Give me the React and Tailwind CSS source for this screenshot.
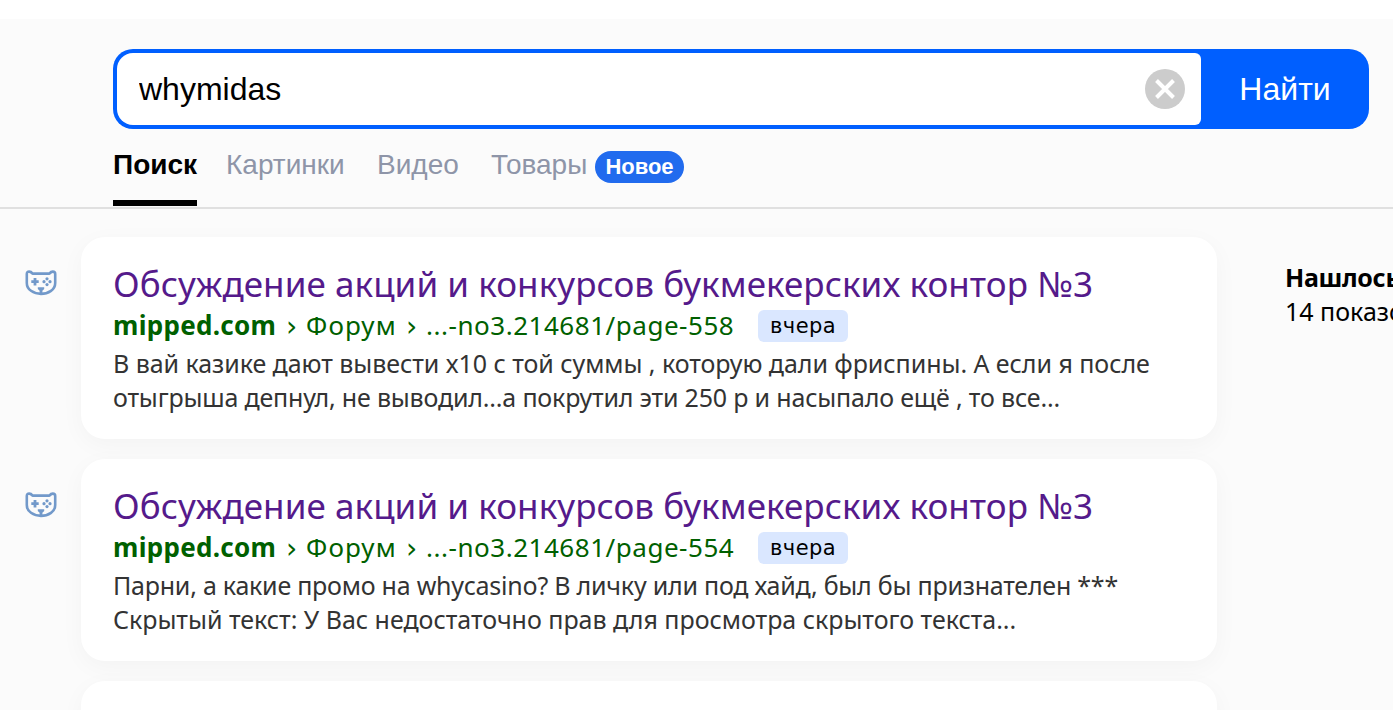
import { useState } from 'react';
import clsx from 'clsx';

const tabs = [
  { id: 'search', label: 'Поиск', className: 'w-[84px] mr-[29px]' },
  { id: 'images', label: 'Картинки', className: 'w-[119px] mr-8' },
  { id: 'video', label: 'Видео', className: 'w-[82px] mr-8' },
  { id: 'goods', label: 'Товары', className: 'w-[96px] mr-2', badge: 'Новое' },
];

const results = [
  {
    id: 1,
    title: 'Обсуждение акций и конкурсов букмекерских контор №3',
    host: 'mipped.com',
    section: 'Форум',
    page: '...-no3.214681/page-558',
    date: 'вчера',
    lines: [
      { text: 'В вай казике дают вывести х10 с той суммы , которую дали фриспины. А если я после', className: 'tracking-[-0.05px]' },
      { text: 'отыгрыша депнул, не выводил...а покрутил эти 250 р и насыпало ещё , то все...', className: 'tracking-[-0.18px]' },
    ],
  },
  {
    id: 2,
    title: 'Обсуждение акций и конкурсов букмекерских контор №3',
    host: 'mipped.com',
    section: 'Форум',
    page: '...-no3.214681/page-554',
    date: 'вчера',
    lines: [
      { text: 'Парни, а какие промо на whycasino? В личку или под хайд, был бы признателен ***', className: 'tracking-[-0.23px]' },
      { text: 'Скрытый текст: У Вас недостаточно прав для просмотра скрытого текста...', className: 'tracking-[-0.02px]' },
    ],
  },
];

function SiteIcon() {
  return (
    <svg width="32" height="28" viewBox="0 0 32 28" fill="none" stroke="#7299ca" strokeWidth="2.6" strokeLinejoin="round" strokeLinecap="round">
      <path d="M1.8 5Q1.8 2.6 4.2 2.6Q6 2.6 7.6 4.6H24.4Q26 2.6 27.8 2.6Q30.2 2.6 30.2 5V14Q30.2 19 26 21.8Q21.5 24.9 16 24.9Q10.5 24.9 6 21.8Q1.8 19 1.8 14Z" />
      <path d="M10 9V16.4M6.3 12.7H13.7" strokeWidth="2.8" strokeLinecap="butt" />
      <g fill="#7299ca" stroke="none">
        <circle cx="22" cy="9.8" r="1.6" />
        <circle cx="22" cy="15.6" r="1.6" />
        <circle cx="19" cy="12.7" r="1.6" />
        <circle cx="25" cy="12.7" r="1.6" />
        <path d="M12.8 18.2H19.2V20L17.4 21.8V25H14.6V21.8L12.8 20Z" />
      </g>
    </svg>
  );
}

function SearchForm() {
  const [query, setQuery] = useState('whymidas');

  return (
    <form onSubmit={(e) => e.preventDefault()} className="flex w-[1256px] h-20 rounded-[20px] bg-[#005fff] p-1 pr-0 overflow-hidden">
      <div className="flex items-center w-[1084px] h-[72px] rounded-l-2xl rounded-r-md bg-white pl-[22px] pr-4">
        <input
          value={query}
          onChange={(e) => setQuery(e.target.value)}
          className="flex-1 min-w-0 text-[32px] leading-10 text-black outline-none"
        />
        <button type="button" onClick={() => setQuery('')} aria-label="Очистить">
          <svg width="40" height="40" viewBox="0 0 40 40">
            <circle cx="20" cy="20" r="20" fill="#ccc" />
            <path d="M11.5 11.5L28.5 28.5M28.5 11.5L11.5 28.5" stroke="#fff" strokeWidth="4" />
          </svg>
        </button>
      </div>
      <button type="submit" className="flex-1 text-[32px] leading-10 text-white">Найти</button>
    </form>
  );
}

function Chevron() {
  return <span className="w-[29px] pt-[3px] text-center text-[28px] leading-8 font-['DejaVu_Sans',sans-serif]">›</span>;
}

function ResultCard({ result }) {
  return (
    <li className="flex">
      <div className="w-[81px] shrink-0 pl-[25px] pt-8"><SiteIcon /></div>
      <div className="w-[1136px] h-[202px] rounded-3xl bg-white pl-8 pt-[23px] shadow-[0_6px_24px_rgba(0,30,20,0.035)] whitespace-nowrap">
        <h2 className="mb-px text-[35px] leading-[47px] tracking-[0.06px] text-[#551a8b]">{result.title}</h2>
        <div className="flex items-center h-[34px] text-[26px] text-[#006000]">
          <b className="w-[164px] font-bold tracking-[0.3px]">{result.host}</b>
          <Chevron />
          <span className="w-[91px] tracking-[1.2px]">{result.section}</span>
          <Chevron />
          <span className="w-[332px] tracking-[0.53px]">{result.page}</span>
          <span className="flex items-center justify-center mt-0.5 w-[90px] h-8 rounded-md bg-[#dae7ff] pt-0.5 text-black text-[21px] tracking-[0.4px] font-['DejaVu_Sans',sans-serif]">{result.date}</span>
        </div>
        <div className="mt-1 text-[25px] leading-[34px] text-[#333]">
          {result.lines.map((line) => (
            <p key={line.text}><span className={line.className}>{line.text}</span></p>
          ))}
        </div>
      </div>
    </li>
  );
}

export default function App() {
  const [activeTab, setActiveTab] = useState('search');

  return (
    <div className="w-[1393px] h-[710px] overflow-hidden bg-[#fbfbfb] font-['Liberation_Sans',Arial,sans-serif]">
      <div className="h-[19px] bg-white" />
      <header className="h-[190px] border-b-2 border-[#e0e0e0] pt-[30px] pl-[113px]">
        <SearchForm />
        <nav className="flex h-[77px]">
          {tabs.map((tab) => (
            <div key={tab.id} className="flex pt-[18px]">
              <button
                onClick={() => setActiveTab(tab.id)}
                className={clsx(
                  'h-[59px] pb-[17px] border-b-6 text-[28px] leading-9 text-left whitespace-nowrap',
                  tab.className,
                  activeTab === tab.id ? 'font-bold text-black border-black' : 'text-[#8e95a8] border-transparent'
                )}
              >
                {tab.label}
              </button>
              {tab.badge && (
                <span className="mt-1 pb-0.5 flex items-center justify-center w-[89px] h-8 rounded-full bg-[#216bee] text-white text-[22px] font-bold">{tab.badge}</span>
              )}
            </div>
          ))}
        </nav>
      </header>

      <main className="flex pt-7 font-['Noto_Sans',sans-serif]">
        <ul className="flex flex-col gap-5 shrink-0">
          {results.map((result) => (
            <ResultCard key={result.id} result={result} />
          ))}
          <li className="ml-[81px] w-[1136px] h-[202px] rounded-3xl bg-white shadow-[0_6px_24px_rgba(0,30,20,0.035)]" />
        </ul>
        <aside className="pl-[68px] pt-[23px] text-[25px] leading-[34px] text-black whitespace-nowrap">
          <p className="font-bold tracking-[-0.3px]">Нашлось</p>
          <p>14 показов</p>
        </aside>
      </main>
    </div>
  );
}
